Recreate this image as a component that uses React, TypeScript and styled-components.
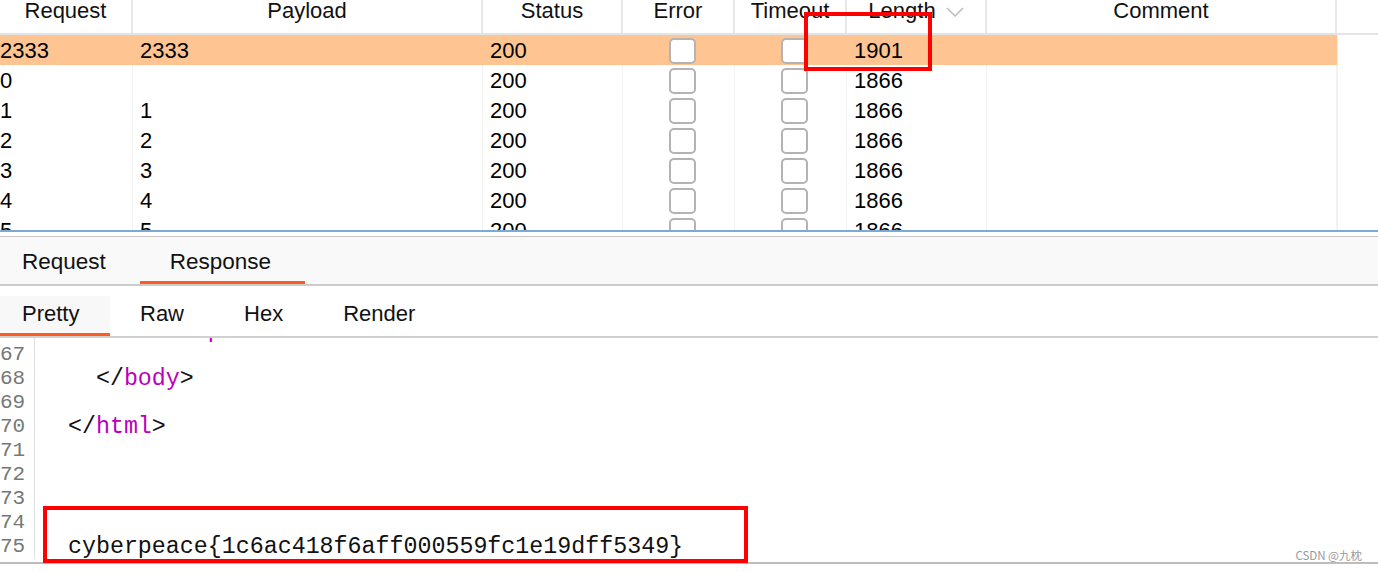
import styled, { createGlobalStyle } from "styled-components";

const GlobalStyle = createGlobalStyle`
  html, body {
    margin: 0;
    padding: 0;
    background: #ffffff;
    overflow: hidden;
  }
  body {
    font-family: "Liberation Sans", Arial, sans-serif;
  }
`;

const COLS = "133px 350px 140px 112px 112px 140px 350px 1fr";

const Page = styled.div`
  position: relative;
  width: 1378px;
  height: 572px;
  display: flex;
  flex-direction: column;
  overflow: hidden;
`;

const Results = styled.div`
  position: relative;
  height: 230px;
  flex-shrink: 0;
  overflow: hidden;
`;

const HeaderRow = styled.div`
  display: grid;
  grid-template-columns: ${COLS};
  height: 33px;
  border-bottom: 2px solid #e4e4e4;
`;

const HeadCell = styled.div`
  display: flex;
  justify-content: center;
  align-items: flex-start;
  gap: 10px;
  font-size: 22px;
  line-height: 22px;
  color: #111;
  border-right: 2px solid #e8e8e8;

  &:last-child {
    border-right: none;
  }
`;

const SortIcon = styled.svg`
  margin-top: 7px;
`;

const Row = styled.div`
  display: grid;
  grid-template-columns: ${COLS};
  height: 30px;
  font-size: 22px;
  color: #000;
`;

const Cell = styled.div<{ $hit?: boolean; $center?: boolean; $first?: boolean }>`
  display: flex;
  align-items: center;
  justify-content: ${(p) => (p.$center ? "center" : "flex-start")};
  padding-left: ${(p) => (p.$first ? "0" : "7px")};
  padding-top: 1px;
  background: ${(p) => (p.$hit ? "#fec592" : "transparent")};
  border-right: 1px solid ${(p) => (p.$hit ? "#fec592" : "#f3f3f3")};
  white-space: nowrap;
`;

const Filler = styled.div`
  border-left: 1px solid #f0f0f0;
`;

const Check = styled.span`
  box-sizing: border-box;
  width: 27px;
  height: 26px;
  border: 2px solid #b3b3b3;
  border-radius: 5px;
  background: #fff;
`;

const Highlight = styled.div<{ $left: number; $top: number; $w: number; $h: number }>`
  position: absolute;
  left: ${(p) => p.$left}px;
  top: ${(p) => p.$top}px;
  width: ${(p) => p.$w}px;
  height: ${(p) => p.$h}px;
  box-sizing: border-box;
  border: 4px solid #ff0000;
  pointer-events: none;
  z-index: 2;
`;

const Splitter = styled.div`
  height: 4px;
  flex-shrink: 0;
  border-top: 2px solid #7aaad8;
  border-bottom: 1px solid #c6c6c6;
`;

const TabBar = styled.div`
  display: flex;
  height: 47px;
  flex-shrink: 0;
  background: #f9f9f9;
  border-bottom: 2px solid #cbcbcb;
`;

const Tab = styled.div<{ $active?: boolean; $first?: boolean }>`
  display: flex;
  align-items: center;
  padding: 2px 34px 0 ${(p) => (p.$first ? "22px" : "30px")};
  font-size: 22.5px;
  color: #111;
  box-shadow: ${(p) => (p.$active ? "inset 0 -3px 0 #ff5a1f" : "none")};
`;

const SubTabBar = styled.div`
  display: flex;
  align-items: flex-end;
  height: 50px;
  flex-shrink: 0;
  border-bottom: 2px solid #d0d0d0;
`;

const SubTab = styled.div<{ $active?: boolean; $first?: boolean }>`
  display: flex;
  align-items: center;
  box-sizing: border-box;
  height: 40px;
  padding: 0 30px 4px ${(p) => (p.$first ? "22px" : "30px")};
  width: ${(p) => (p.$first ? "110px" : "auto")};
  font-size: 22px;
  color: #111;
  background: ${(p) => (p.$active ? "#f8f8f8" : "transparent")};
  box-shadow: ${(p) => (p.$active ? "inset 0 -3px 0 #ff5a1f" : "none")};
`;

const CodeArea = styled.div`
  position: relative;
  height: 224px;
  flex-shrink: 0;
  border-bottom: 2px solid #bdbdbd;
`;

const CodeScroll = styled.div`
  height: 100%;
  overflow: hidden;
`;

const Lines = styled.div`
  margin-top: -19px;
`;

const Line = styled.div`
  display: flex;
  height: 24px;
  font-family: "Liberation Mono", "Courier New", monospace;
`;

const LineNo = styled.div`
  box-sizing: border-box;
  width: 35px;
  flex-shrink: 0;
  padding-right: 9px;
  border-right: 1px solid #e0e0e0;
  text-align: right;
  font-size: 21px;
  line-height: 24px;
  color: #777;
`;

const Code = styled.pre`
  margin: 0;
  padding-left: 5px;
  font-family: inherit;
  font-size: 23.3px;
  line-height: 24px;
  color: #111;
`;

const Tag = styled.span`
  color: #bb00bb;
`;

const Watermark = styled.div`
  position: absolute;
  right: 16px;
  bottom: 11px;
  font-family: "Noto Sans CJK SC", "Liberation Sans", sans-serif;
  font-size: 11.5px;
  line-height: 12px;
  color: #9a9a9a;
`;

type Result = { req: string; payload: string; status: string; length: string; hit?: boolean };

const results: Result[] = [
  { req: "2333", payload: "2333", status: "200", length: "1901", hit: true },
  { req: "0", payload: "", status: "200", length: "1866" },
  { req: "1", payload: "1", status: "200", length: "1866" },
  { req: "2", payload: "2", status: "200", length: "1866" },
  { req: "3", payload: "3", status: "200", length: "1866" },
  { req: "4", payload: "4", status: "200", length: "1866" },
  { req: "5", payload: "5", status: "200", length: "1866" },
];

type Piece = { t: string; tag?: boolean };

const code: { n: number; parts: Piece[] }[] = [
  { n: 66, parts: [{ t: "      </" }, { t: "script", tag: true }, { t: ">" }] },
  { n: 67, parts: [] },
  { n: 68, parts: [{ t: "    </" }, { t: "body", tag: true }, { t: ">" }] },
  { n: 69, parts: [] },
  { n: 70, parts: [{ t: "  </" }, { t: "html", tag: true }, { t: ">" }] },
  { n: 71, parts: [] },
  { n: 72, parts: [] },
  { n: 73, parts: [] },
  { n: 74, parts: [] },
  { n: 75, parts: [{ t: "  cyberpeace{1c6ac418f6aff000559fc1e19dff5349}" }] },
];

export default function App() {
  return (
    <Page>
      <GlobalStyle />
      <Results>
        <HeaderRow>
          <HeadCell>Request</HeadCell>
          <HeadCell>Payload</HeadCell>
          <HeadCell>Status</HeadCell>
          <HeadCell>Error</HeadCell>
          <HeadCell>Timeout</HeadCell>
          <HeadCell>
            Length
            <SortIcon width="18" height="10" viewBox="0 0 18 10">
              <polyline points="1,1 9,9 17,1" fill="none" stroke="#bbbbbb" strokeWidth="1.5" />
            </SortIcon>
          </HeadCell>
          <HeadCell>Comment</HeadCell>
          <HeadCell />
        </HeaderRow>
        {results.map((r) => (
          <Row key={r.req}>
            <Cell $first $hit={r.hit}>{r.req}</Cell>
            <Cell $hit={r.hit}>{r.payload}</Cell>
            <Cell $hit={r.hit}>{r.status}</Cell>
            <Cell $hit={r.hit} $center>
              <Check />
            </Cell>
            <Cell $hit={r.hit} $center>
              <Check />
            </Cell>
            <Cell $hit={r.hit}>{r.length}</Cell>
            <Cell $hit={r.hit} />
            <Filler />
          </Row>
        ))}
        <Highlight $left={804} $top={12} $w={128} $h={59} />
      </Results>
      <Splitter />
      <TabBar>
        <Tab $first>Request</Tab>
        <Tab $active>Response</Tab>
      </TabBar>
      <SubTabBar>
        <SubTab $first $active>Pretty</SubTab>
        <SubTab>Raw</SubTab>
        <SubTab>Hex</SubTab>
        <SubTab>Render</SubTab>
      </SubTabBar>
      <CodeArea>
        <CodeScroll>
          <Lines>
            {code.map((l) => (
              <Line key={l.n}>
                <LineNo>{l.n}</LineNo>
                <Code>
                  {l.parts.map((p, i) => (p.tag ? <Tag key={i}>{p.t}</Tag> : <span key={i}>{p.t}</span>))}
                </Code>
              </Line>
            ))}
          </Lines>
        </CodeScroll>
        <Highlight $left={43} $top={168} $w={705} $h={57} />
      </CodeArea>
      <Watermark>CSDN @九枕</Watermark>
    </Page>
  );
}
